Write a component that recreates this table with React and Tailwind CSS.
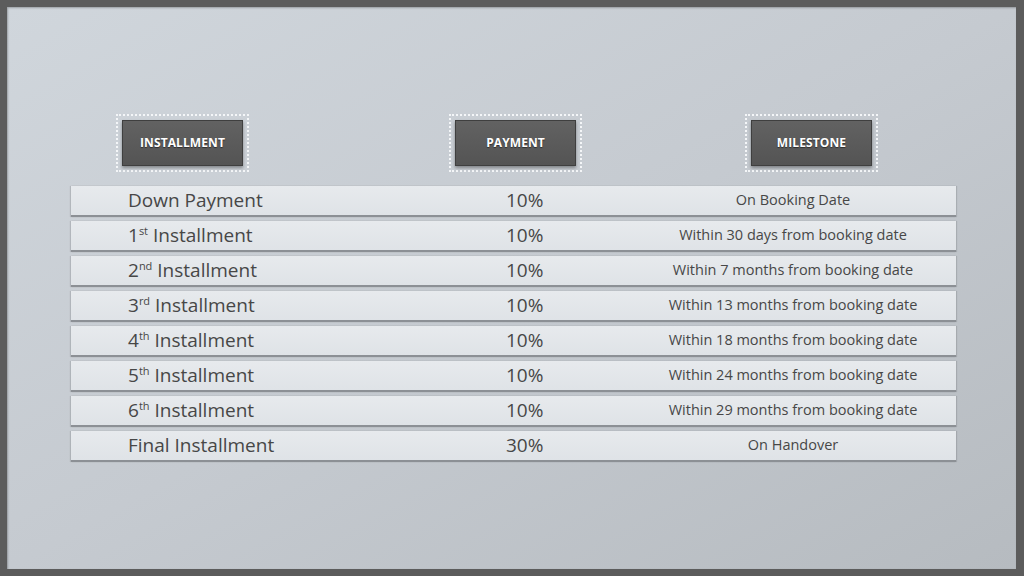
import React from 'react';

const rows = [
  { n: 'Down Payment', p: '10%', m: 'On Booking Date' },
  { n: '1', sup: 'st', p: '10%', m: 'Within 30 days from booking date' },
  { n: '2', sup: 'nd', p: '10%', m: 'Within 7 months from booking date' },
  { n: '3', sup: 'rd', p: '10%', m: 'Within 13 months from booking date' },
  { n: '4', sup: 'th', p: '10%', m: 'Within 18 months from booking date' },
  { n: '5', sup: 'th', p: '10%', m: 'Within 24 months from booking date' },
  { n: '6', sup: 'th', p: '10%', m: 'Within 29 months from booking date' },
  { n: 'Final Installment', p: '30%', m: 'On Handover' },
];

function HeadBox({ label, className }) {
  return (
    <div className={"w-[133px] h-[58px] p-[4px] border-2 border-dotted border-[#f4f6f8] " + className}>
      <div className="h-full flex items-center justify-center bg-gradient-to-b from-[#626262] to-[#545454] border border-[#3f3f3f] shadow-[0_2px_3px_rgba(0,0,0,0.35)]">
        <span className="text-white text-[12px] font-bold tracking-[0.1px] [text-shadow:0_1px_1px_rgba(0,0,0,0.5)]">{label}</span>
      </div>
    </div>
  );
}

export default function App() {
  return (
    <div className="w-[1024px] h-[576px] bg-[#5c5c5c] pt-[7px] pl-[7px] pr-[8px] pb-[7px]" style={{ fontFamily: '"Open Sans", "Noto Sans", sans-serif' }}>
      <div className="w-full h-full bg-gradient-to-br from-[#d0d6dc] via-[#c5cad0] to-[#b6bbc0] shadow-[inset_1px_1px_2px_rgba(0,0,0,0.25)] pt-[107px] pl-[64px]">
        <div className="w-[885px]">
          <div className="flex">
            <HeadBox label="INSTALLMENT" className="ml-[45px]" />
            <HeadBox label="PAYMENT" className="ml-[200px]" />
            <HeadBox label="MILESTONE" className="ml-[163px]" />
          </div>

          <div className="mt-[14px] flex flex-col gap-[4px]">
            {rows.map((r, i) => (
              <div key={i} className="h-[31px] grid grid-cols-[435px_134px_1fr] items-center bg-gradient-to-b from-[#e7eaed] to-[#dfe3e7] border-b-2 border-[#8c9095] shadow-[-1px_0_1px_rgba(0,0,0,0.12),1px_0_1px_rgba(0,0,0,0.12)] text-[#474747]">
                <div className="pl-[57px] text-[19px] font-medium leading-none">
                  {r.n}
                  {r.sup && <span className="text-[11px] relative -top-[7px]">{r.sup}</span>}
                  {r.sup && ' Installment'}
                </div>
                <div className="text-[19px] font-medium leading-none">{r.p}</div>
                <div className="text-center text-[14.5px] font-medium leading-none pr-[10px]">{r.m}</div>
              </div>
            ))}
          </div>
        </div>
      </div>
    </div>
  );
}
